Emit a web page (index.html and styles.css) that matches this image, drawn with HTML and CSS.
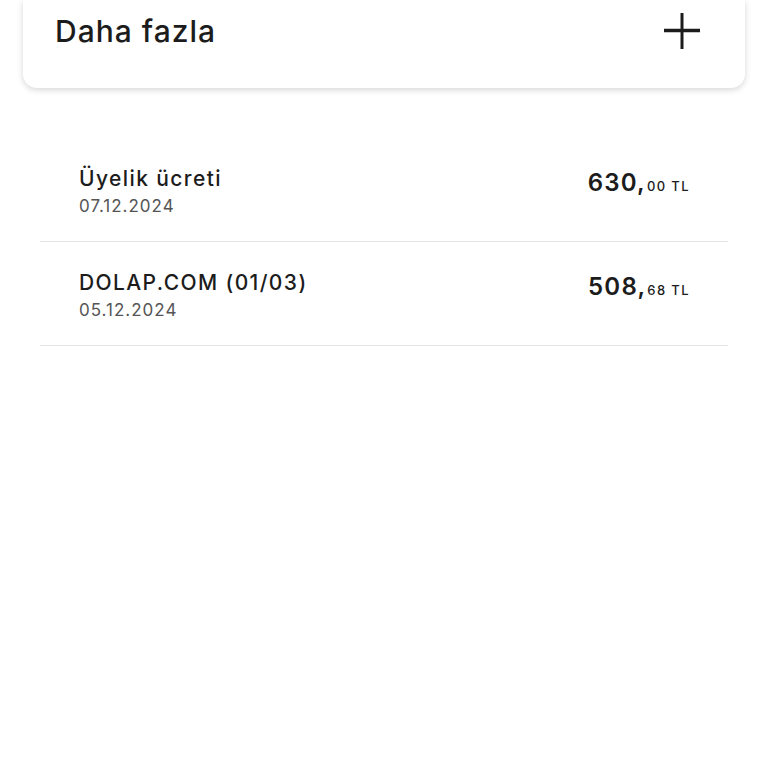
FILE: index.html
```html
<!DOCTYPE html>
<html>
	<head>
		<meta charset="utf-8">
		<title>Hareketler</title>
		<link rel="stylesheet" href="styles.css">
	</head>
	<body>
		<div class="more_card">
			<div class="more_card__head">
				<span class="more_card__title">Daha fazla</span>
				<svg class="more_card__icon" width="38" height="38" viewBox="0 0 38 38">
					<path d="M19 1 V37" stroke="#1c1c1c" stroke-width="3" fill="none"/>
					<path d="M1 18.5 H37" stroke="#1c1c1c" stroke-width="3.5" fill="none"/>
				</svg>
			</div>
		</div>

		<ul class="trans_list">
			<li class="trans_list__item">
				<div class="trans_list__info">
					<span class="trans_list__name">Üyelik ücreti</span>
					<span class="trans_list__date">07.12.2024</span>
				</div>
				<div class="trans_list__amount">630,<small>00 TL</small></div>
			</li>
			<li class="trans_list__item">
				<div class="trans_list__info">
					<span class="trans_list__name">DOLAP.COM (01/03)</span>
					<span class="trans_list__date">05.12.2024</span>
				</div>
				<div class="trans_list__amount">508,<small>68 TL</small></div>
			</li>
		</ul>
	</body>
</html>
```

FILE: styles.css
```css
html, body, ul, li { margin:0; padding:0; }
ul, li { list-style:none; }
body { background:#fff; font-family:Inter, "Noto Sans", sans-serif; color:#1c1c1c; }

.more_card { height:88px; margin:0 23px; background:#fff; border-radius:0 0 14px 14px; box-shadow:0 2px 6px rgba(0,0,0,0.16); }
.more_card__head { display:flex; align-items:center; justify-content:space-between; height:62px; padding:0 44px 0 32px; }
.more_card__title { font-size:30px; font-weight:500; letter-spacing:1px; }
.more_card__icon { display:block; }

.trans_list { margin:50px 40px 0 40px; }
.trans_list__item { display:flex; justify-content:space-between; align-items:flex-start; padding:28px 38px 24px 39px; border-bottom:1px solid #e3e3e3; }
.trans_list__info { display:flex; flex-direction:column; gap:3px; }
.trans_list__name { font-size:21px; line-height:26px; font-weight:500; letter-spacing:1.4px; }
.trans_list__date { font-size:17px; line-height:22px; color:#555; letter-spacing:1px; }
.trans_list__amount { font-size:24px; line-height:30px; font-weight:600; letter-spacing:1.2px; margin-top:2px; }
.trans_list__amount small { font-size:13px; font-weight:500; letter-spacing:1.4px; margin-left:1px; }
```
